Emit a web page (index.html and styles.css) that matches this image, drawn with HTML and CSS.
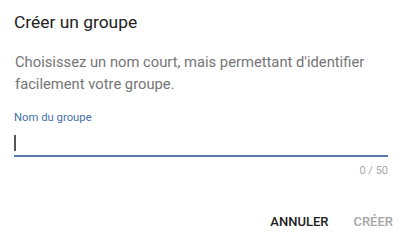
FILE: index.html
```html
<!DOCTYPE html>
<html lang="fr">
<head>
<meta charset="utf-8">
<link rel="stylesheet" href="styles.css">
</head>
<body>
<div class="dialog">
  <h1 class="title">Créer un groupe</h1>
  <p class="desc">Choisissez un nom court, mais permettant d'identifier facilement votre groupe.</p>
  <div class="field">
    <label class="label">Nom du groupe</label>
    <div class="input"><span class="cursor"></span></div>
    <div class="counter">0 / 50</div>
  </div>
  <div class="actions">
    <span class="btn btn-primary">ANNULER</span>
    <span class="btn btn-disabled">CRÉER</span>
  </div>
</div>
</body>
</html>
```
FILE: styles.css
```css
html, body {
  margin: 0;
  padding: 0;
  background: #ffffff;
}
body {
  width: 400px;
  height: 249px;
  overflow: hidden;
  font-family: Roboto, "Noto Sans", sans-serif;
}
.dialog {
  padding: 12px 12px 0 14px;
  display: flex;
  flex-direction: column;
}
.title {
  margin: 0;
  font-size: 17.4px;
  line-height: 20px;
  font-weight: 400;
  color: #212121;
}
.desc {
  margin: 19px 0 0 0;
  font-size: 14.75px;
  line-height: 22px;
  color: #757575;
  padding-left: 1px;
}
.field {
  margin-top: 16px;
  display: flex;
  flex-direction: column;
}
.label {
  font-size: 11.3px;
  line-height: 14px;
  color: #4670aa;
}
.input {
  height: 30px;
  border-bottom: 2px solid #5679ae;
  display: flex;
  align-items: flex-start;
}
.cursor {
  width: 2px;
  height: 16px;
  margin-top: 10px;
  background: #555555;
}
.counter {
  margin-top: 7px;
  align-self: flex-end;
  font-size: 11px;
  line-height: 14px;
  color: #a8a8a8;
}
.actions {
  margin-top: 36px;
  display: flex;
  justify-content: flex-end;
  gap: 25px;
  margin-right: -5px;
}
.btn {
  font-size: 13px;
  line-height: 16px;
  font-weight: 500;
}
.btn-primary {
  color: #212121;
}
.btn-disabled {
  color: #a6a6a6;
}
```
